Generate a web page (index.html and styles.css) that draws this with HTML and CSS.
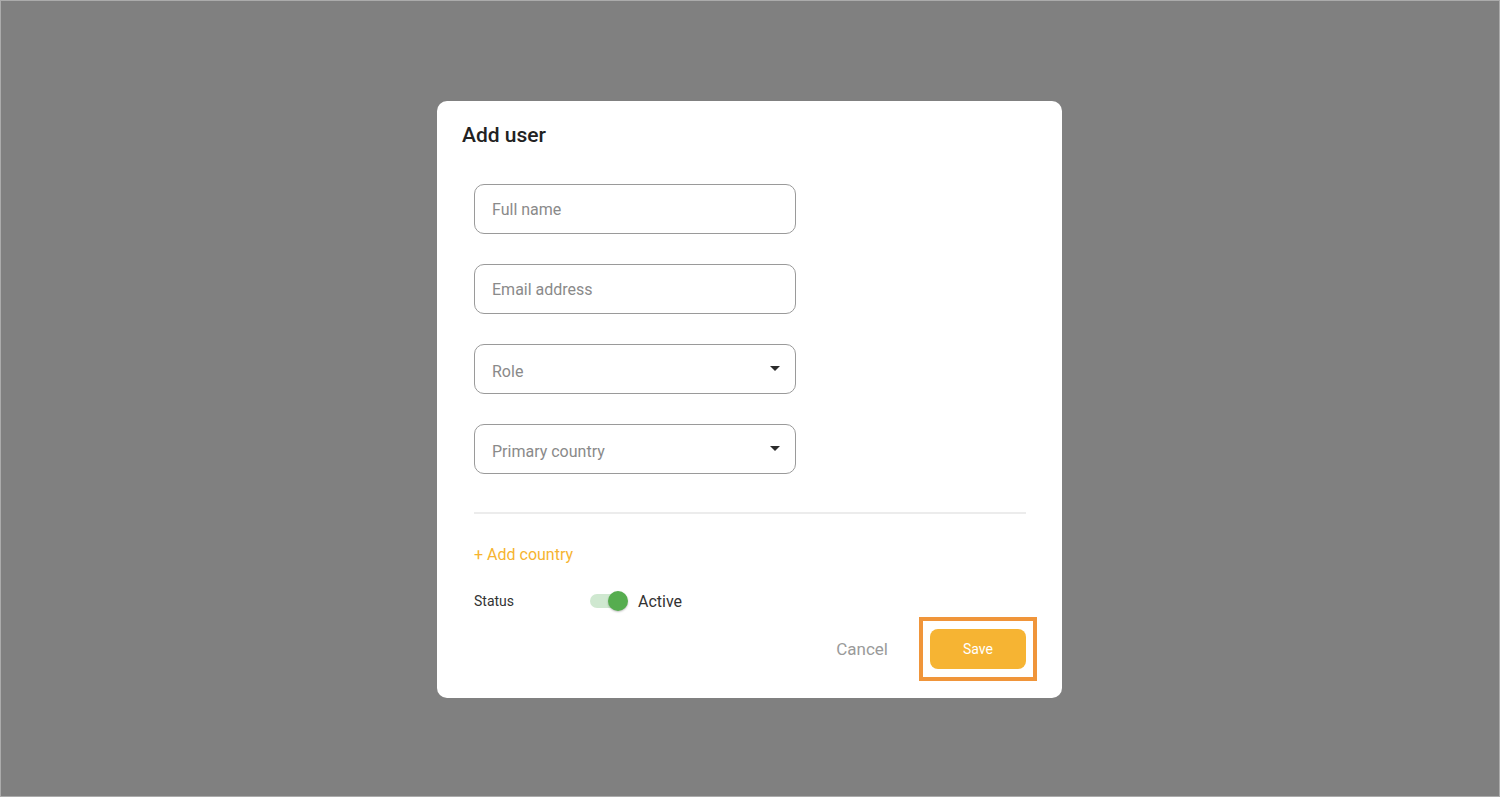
FILE: index.html
```html
<!DOCTYPE html>
<html lang="en">
<head>
    <meta charset="UTF-8">
    <meta name="viewport" content="width=device-width, initial-scale=1.0">
    <title>Add user</title>
    <link rel="stylesheet" href="styles.css">
</head>
<body>
    <div class="dialog">
        <h2 class="dialog-title">Add user</h2>

        <div class="dialog-body">
            <div class="fields">
                <input class="field" type="text" placeholder="Full name">
                <input class="field" type="email" placeholder="Email address">
                <div class="field select">
                    <span class="select-label">Role</span>
                    <svg class="caret" width="10" height="5" viewBox="0 0 10 5"><path d="M0 0h10L5 5z"/></svg>
                </div>
                <div class="field select">
                    <span class="select-label">Primary country</span>
                    <svg class="caret" width="10" height="5" viewBox="0 0 10 5"><path d="M0 0h10L5 5z"/></svg>
                </div>
            </div>

            <hr class="divider">

            <a class="add-link" href="#">+ Add country</a>

            <div class="status-row">
                <span class="status-label">Status</span>
                <span class="switch">
                    <span class="switch-track"></span>
                    <span class="switch-thumb"></span>
                </span>
                <span class="status-value">Active</span>
            </div>

            <div class="actions">
                <button class="btn-cancel">Cancel</button>
                <button class="btn-save">Save</button>
            </div>
        </div>
    </div>
</body>
</html>
```

FILE: styles.css
```css
* {
    box-sizing: border-box;
}
body {
    margin: 0;
    height: 797px;
    background: #808080;
    border: 1px solid #ababab;
    font-family: Roboto, "Liberation Sans", sans-serif;
    color: #333;
    display: flex;
    justify-content: center;
    align-items: flex-start;
    padding-top: 100px;
}
.dialog {
    width: 625px;
    height: 597px;
    margin-right: 1px;
    background: #fff;
    border-radius: 10px;
    padding: 20px 36px 0 25px;
}
.dialog-title {
    margin: 0;
    font-size: 21px;
    line-height: 28px;
    font-weight: 500;
    color: #222;
}
.dialog-body {
    padding-left: 12px;
    margin-top: 35px;
}
.fields {
    display: flex;
    flex-direction: column;
    gap: 30px;
}
.field {
    width: 322px;
    height: 50px;
    border: 1px solid #9a9a9a;
    border-radius: 10px;
    padding: 0 15px 0 17px;
    font-family: inherit;
    font-size: 16px;
    color: #333;
    outline: none;
    background: #fff;
}
.field::placeholder {
    color: #8a8a8a;
}
.select {
    display: flex;
    align-items: center;
    justify-content: space-between;
    padding-top: 5px;
}
.select-label {
    color: #8a8a8a;
}
.caret {
    fill: #2b2b2b;
    margin-top: -7px;
}
.divider {
    border: none;
    border-top: 2px solid #ececec;
    margin: 38px 0 0 0;
}
.add-link {
    display: block;
    margin-top: 31px;
    line-height: 20px;
    font-size: 16px;
    color: #f6b431;
    text-decoration: none;
}
.status-row {
    display: flex;
    align-items: center;
    height: 24px;
    margin-top: 24px;
}
.status-label {
    width: 116px;
    font-size: 14px;
}
.switch {
    position: relative;
    width: 38px;
    height: 20px;
    margin-right: 10px;
}
.switch-track {
    position: absolute;
    left: 0;
    top: 3px;
    width: 36px;
    height: 14px;
    border-radius: 7px;
    background: #cfe8d0;
}
.switch-thumb {
    position: absolute;
    left: 18px;
    top: 0;
    width: 20px;
    height: 20px;
    border-radius: 50%;
    background: #56ad4f;
    box-shadow: 0 1px 2px rgba(0, 0, 0, 0.25);
}
.status-value {
    font-size: 16px;
    color: #333;
}
.actions {
    display: flex;
    justify-content: flex-end;
    align-items: center;
    margin-top: 16px;
}
.btn-cancel {
    background: none;
    border: none;
    font-family: inherit;
    font-size: 17px;
    color: #9a9a9a;
    padding: 0;
    margin-right: 42px;
    cursor: pointer;
}
.btn-save {
    position: relative;
    width: 96px;
    height: 40px;
    border: none;
    border-radius: 8px;
    background: #f6b433;
    color: #fff;
    font-family: inherit;
    font-size: 14px;
    cursor: pointer;
}
/* highlight frame around the primary action */
.btn-save::after {
    content: "";
    position: absolute;
    top: -12px;
    bottom: -12px;
    left: -11px;
    right: -11px;
    border: 4px solid #f0953a;
}
```
